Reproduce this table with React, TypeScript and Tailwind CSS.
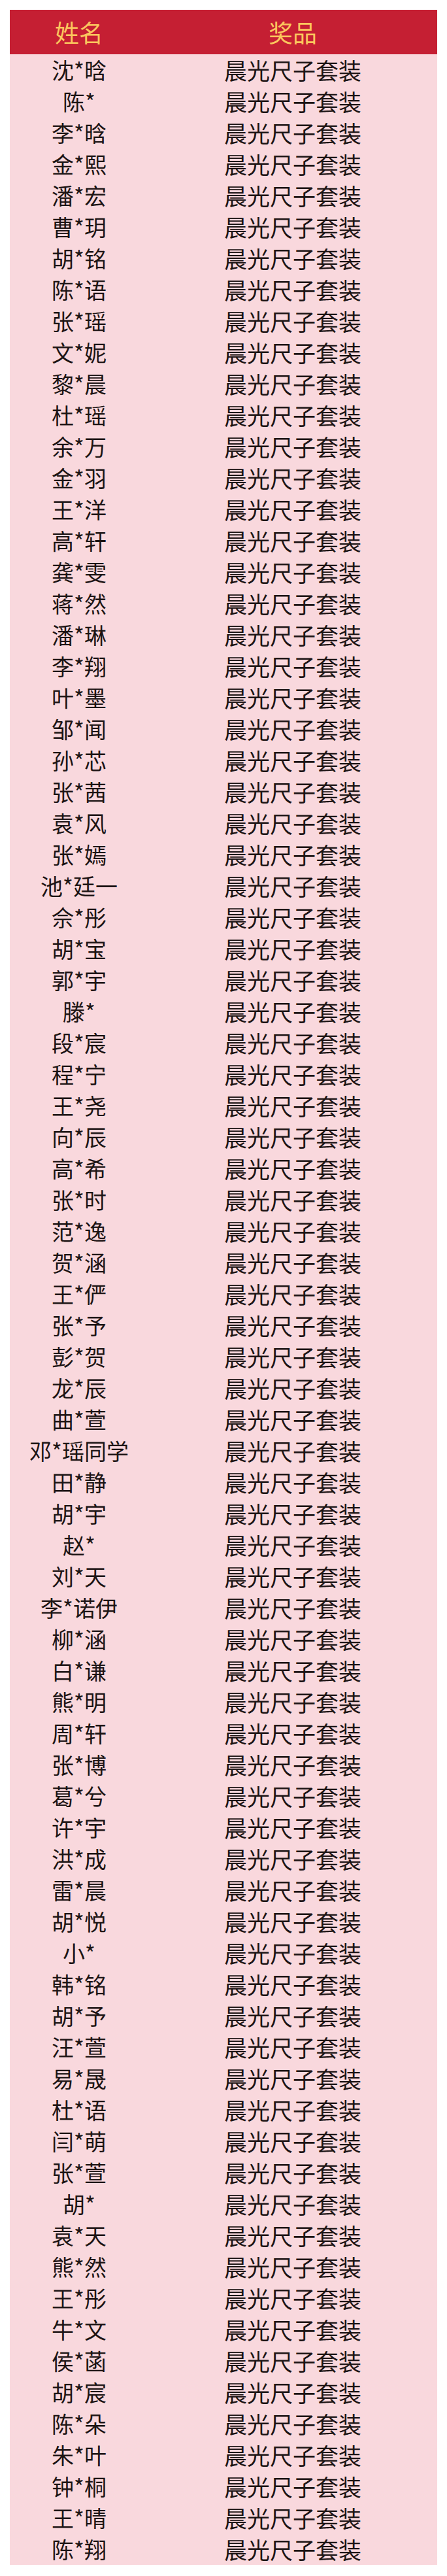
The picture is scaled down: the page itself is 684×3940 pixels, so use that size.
import React from 'react';

const names = [
  '沈*晗', '陈*', '李*晗', '金*熙', '潘*宏', '曹*玥', '胡*铭', '陈*语', '张*瑶', '文*妮',
  '黎*晨', '杜*瑶', '余*万', '金*羽', '王*洋', '高*轩', '龚*雯', '蒋*然', '潘*琳', '李*翔',
  '叶*墨', '邹*闻', '孙*芯', '张*茜', '袁*风', '张*嫣', '池*廷一', '佘*彤', '胡*宝', '郭*宇',
  '滕*', '段*宸', '程*宁', '王*尧', '向*辰', '高*希', '张*时', '范*逸', '贺*涵', '王*俨',
  '张*予', '彭*贺', '龙*辰', '曲*萱', '邓*瑶同学', '田*静', '胡*宇', '赵*', '刘*天', '李*诺伊',
  '柳*涵', '白*谦', '熊*明', '周*轩', '张*博', '葛*兮', '许*宇', '洪*成', '雷*晨', '胡*悦',
  '小*', '韩*铭', '胡*予', '汪*萱', '易*晟', '杜*语', '闫*萌', '张*萱', '胡*', '袁*天',
  '熊*然', '王*彤', '牛*文', '侯*菡', '胡*宸', '陈*朵', '朱*叶', '钟*桐', '王*晴', '陈*翔',
];

const PRIZE = '晨光尺子套装';

export default function App() {
  return (
    <div className="w-[684px] h-[3940px] bg-white pt-[15px] px-[15px] font-['Noto_Sans_CJK_SC',sans-serif]">
      <div className="w-[654px]">
        {/* Header */}
        <div className="grid grid-cols-[212px_1fr] h-[68px] items-center bg-[#c51f33] text-[#fbc65e] text-[37px] leading-[68px]">
          <div className="text-center">姓名</div>
          <div className="text-center">奖品</div>
        </div>

        {/* Rows */}
        <div className="bg-[#f9d8dd] text-[#1c1414] text-[34px]">
          {names.map((name, i) => (
            <div key={i} className="grid grid-cols-[212px_1fr] h-[48px] items-center leading-[48px]">
              <div className="text-center whitespace-nowrap">{name}</div>
              <div className="text-center text-[35px] whitespace-nowrap">{PRIZE}</div>
            </div>
          ))}
        </div>
      </div>
    </div>
  );
}
